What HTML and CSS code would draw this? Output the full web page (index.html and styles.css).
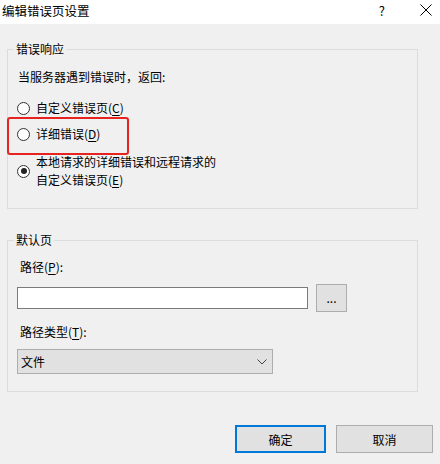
FILE: index.html
```html
<!DOCTYPE html>
<html lang="zh-CN">
<head>
  <meta charset="UTF-8" />
  <meta name="viewport" content="width=device-width, initial-scale=1.0" />
  <title>编辑错误页设置</title>
  <link rel="stylesheet" href="styles.css">
</head>
<body>

<header class="titlebar">
  <span class="title">编辑错误页设置</span>
  <span class="help">?</span>
  <svg class="close" width="12" height="12" viewBox="0 0 12 12">
    <path d="M0.5 0.5L11.5 11.5M11.5 0.5L0.5 11.5" stroke="#000" stroke-width="1" fill="none"/>
  </svg>
</header>

<main class="dialog">
  <fieldset class="group">
    <legend>错误响应</legend>
    <div class="group-body">
      <p class="hint">当服务器遇到错误时，返回:</p>
      <label class="radio first"><span class="dot"></span><span>自定义错误页(<u>C</u>)</span></label>
      <label class="radio marked"><span class="dot"></span><span>详细错误(<u>D</u>)</span></label>
      <label class="radio checked"><span class="dot"></span><span>本地请求的详细错误和远程请求的<br>自定义错误页(<u>E</u>)</span></label>
    </div>
  </fieldset>

  <fieldset class="group second">
    <legend>默认页</legend>
    <div class="group-body">
      <p class="field-label">路径(<u>P</u>):</p>
      <div class="path-row">
        <div class="textbox"></div>
        <button class="btn browse">...</button>
      </div>
      <p class="field-label type">路径类型(<u>T</u>):</p>
      <div class="combo">
        <span>文件</span>
        <svg width="10" height="6" viewBox="0 0 10 6">
          <path d="M0.5 0.5L5 5L9.5 0.5" stroke="#444" stroke-width="1" fill="none"/>
        </svg>
      </div>
    </div>
  </fieldset>

  <div class="actions">
    <button class="btn ok">确定</button>
    <button class="btn cancel">取消</button>
  </div>
</main>

</body>
</html>
```

FILE: styles.css
```css
* {box-sizing: border-box;}
body {
  margin: 0;
  background-color: #f0f0f0;
  font-family: "Noto Sans CJK SC", "Noto Sans", sans-serif;
  font-size: 12px;
  color: #000;
}
p {margin: 0;}
u {text-underline-offset: 2px;}

.titlebar {
  height: 24px;
  background-color: #fff;
  display: flex;
  align-items: center;
  padding: 0 0 4px 2px;
}
.title {flex: 1; font-size: 12.5px;}
.help {font-size: 13px; margin-right: 35px;}
.close {margin-right: 8px;}

.dialog {padding: 0 22px 0 7px;}

.group {
  margin: 17px 0 0 0;
  padding: 0;
  border: 1px solid #dcdcdc;
  min-width: 0;
}
.group legend {
  margin-left: 6px;
  padding: 0 2px;
  line-height: 16px;
}
.group-body {padding: 11px 10px 19px 10px;}
.second {margin-top: 23px;}
.second .group-body {padding: 10px 9px 17px 9px;}

.hint {line-height: 18px;}

.radio {
  display: flex;
  align-items: center;
  gap: 6px;
  line-height: 18px;
  margin-left: -1px;
  position: relative;
}
.radio.first {margin-top: 13px;}
.radio.marked {margin-top: 8px;}
.radio.checked {margin-top: 10px;}
.dot {
  width: 13px;
  height: 13px;
  flex: none;
  border: 1px solid #333;
  border-radius: 50%;
  background-color: #fff;
  position: relative;
}
.checked .dot::after {
  content: "";
  position: absolute;
  left: 2.5px;
  top: 2.5px;
  width: 6px;
  height: 6px;
  border-radius: 50%;
  background-color: #222;
}
.marked::after {
  content: "";
  position: absolute;
  left: -10px;
  top: -8px;
  width: 118px;
  height: 34px;
  border: 2px solid #e8231f;
  border-radius: 3px;
}

.field-label {line-height: 18px; padding-left: 3px;}
.field-label.type {margin-top: 11px;}
.path-row {
  display: flex;
  align-items: center;
  gap: 8px;
  margin-top: 8px;
}
.textbox {
  width: 291px;
  height: 22px;
  background-color: #fff;
  border: 1px solid #7a7a7a;
}
.btn {
  font-family: inherit;
  font-size: 12px;
  color: #000;
  background-color: #e1e1e1;
  border: 1px solid #adadad;
  padding: 0;
  height: 28px;
}
.browse {width: 31px; line-height: 20px;}
.combo {
  margin-top: 8px;
  width: 256px;
  height: 25px;
  background-color: #e1e1e1;
  border: 1px solid #adadad;
  display: flex;
  align-items: center;
  justify-content: space-between;
  padding: 0 5px 0 3px;
}

.actions {
  display: flex;
  justify-content: flex-end;
  gap: 10px;
  margin: 33px -15px 0 0;
}
.ok {width: 91px; border: 2px solid #0078d7;}
.cancel {width: 97px;}
```
